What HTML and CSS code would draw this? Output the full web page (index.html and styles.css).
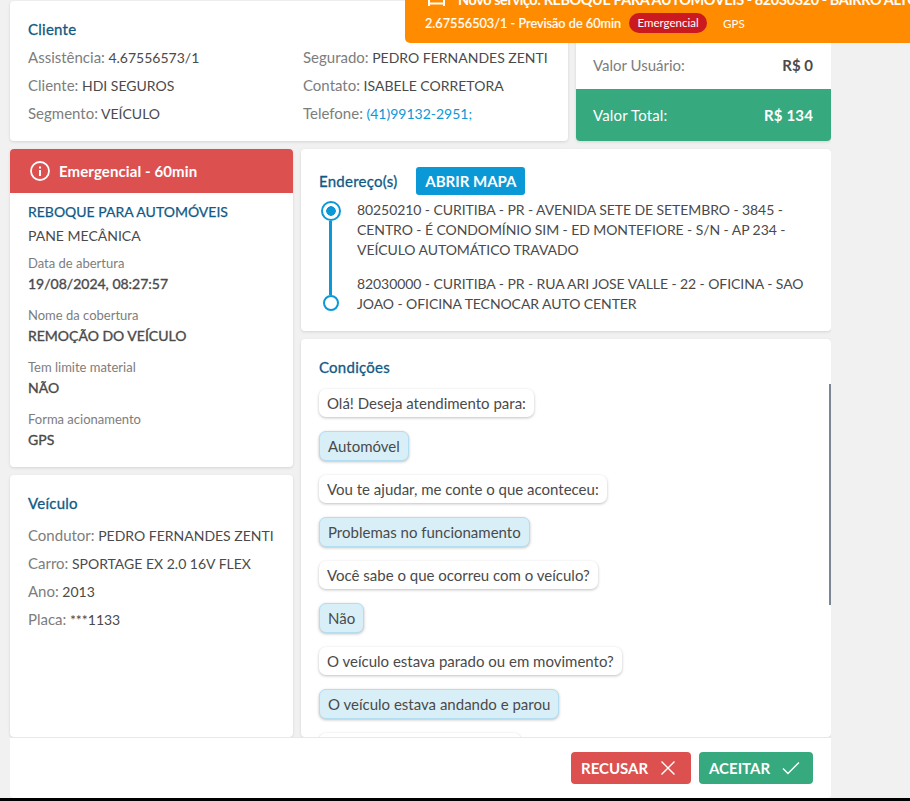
FILE: index.html
```html
<!DOCTYPE html>
<html lang="pt-BR">
<head>
<meta charset="utf-8">
<title>Novo serviço</title>
<link rel="stylesheet" href="styles.css">
</head>
<body>
<div class="modal">
  <div class="layout">
    <div class="toprow">
      <section class="card client">
        <h3 class="heading">Cliente</h3>
        <div class="client-grid">
          <div class="col">
            <p class="line"><span class="lbl">Assistência:</span> 4.67556573/1</p>
            <p class="line"><span class="lbl">Cliente:</span> HDI SEGUROS</p>
            <p class="line"><span class="lbl">Segmento:</span> VEÍCULO</p>
          </div>
          <div class="col">
            <p class="line"><span class="lbl">Segurado:</span> PEDRO FERNANDES ZENTI</p>
            <p class="line"><span class="lbl">Contato:</span> ISABELE CORRETORA</p>
            <p class="line"><span class="lbl">Telefone:</span> <a class="tel">(41)99132-2951;</a></p>
          </div>
        </div>
      </section>
      <section class="card values">
        <div class="val-spacer"></div>
        <div class="val-row"><span class="lbl">Valor Usuário:</span><b>R$ 0</b></div>
        <div class="val-total"><span>Valor Total:</span><b>R$ 134</b></div>
      </section>
    </div>
    <div class="mainrow">
      <div class="side">
        <section class="card service">
          <div class="banner">
            <svg class="info" viewBox="0 0 20 20" width="20" height="20"><circle cx="10" cy="10" r="9" fill="none" stroke="#fff" stroke-width="1.8"/><rect x="9" y="9" width="2" height="6" fill="#fff"/><rect x="9" y="5.5" width="2" height="2" fill="#fff"/></svg>
            <span>Emergencial - 60min</span>
          </div>
          <div class="service-body">
            <div class="svc-title">REBOQUE PARA AUTOMÓVEIS</div>
            <div class="svc-sub">PANE MECÂNICA</div>
            <div class="field"><small>Data de abertura</small><strong>19/08/2024, 08:27:57</strong></div>
            <div class="field"><small>Nome da cobertura</small><strong>REMOÇÃO DO VEÍCULO</strong></div>
            <div class="field"><small>Tem limite material</small><strong>NÃO</strong></div>
            <div class="field"><small>Forma acionamento</small><strong>GPS</strong></div>
          </div>
        </section>
        <section class="card vehicle">
          <h3 class="heading">Veículo</h3>
          <p class="line"><span class="lbl">Condutor:</span> PEDRO FERNANDES ZENTI</p>
          <p class="line"><span class="lbl">Carro:</span> SPORTAGE EX 2.0 16V FLEX</p>
          <p class="line"><span class="lbl">Ano:</span> 2013</p>
          <p class="line"><span class="lbl">Placa:</span> ***1133</p>
        </section>
      </div>
      <div class="center">
        <section class="card address">
          <div class="addr-head">
            <h3 class="heading">Endereço(s)</h3>
            <button class="map-btn">ABRIR MAPA</button>
          </div>
          <div class="route">
            <div class="stop first">
              <span class="dot dot-on"></span>
              <p>80250210 - CURITIBA - PR - AVENIDA SETE DE SETEMBRO - 3845 - CENTRO - É CONDOMÍNIO SIM - ED MONTEFIORE - S/N - AP 234 - VEÍCULO AUTOMÁTICO TRAVADO</p>
            </div>
            <div class="stop">
              <span class="dot"></span>
              <p>82030000 - CURITIBA - PR - RUA ARI JOSE VALLE - 22 - OFICINA - SAO JOAO - OFICINA TECNOCAR AUTO CENTER</p>
            </div>
          </div>
        </section>
        <section class="card conditions">
          <h3 class="heading">Condições</h3>
          <div class="chat">
            <div class="bubble">Olá! Deseja atendimento para:</div>
            <div class="bubble ans">Automóvel</div>
            <div class="bubble">Vou te ajudar, me conte o que aconteceu:</div>
            <div class="bubble ans">Problemas no funcionamento</div>
            <div class="bubble">Você sabe o que ocorreu com o veículo?</div>
            <div class="bubble ans">Não</div>
            <div class="bubble">O veículo estava parado ou em movimento?</div>
            <div class="bubble ans">O veículo estava andando e parou</div>
            <div class="bubble">Qual é o problema do carro?</div>
          </div>
          <span class="scroll"></span>
        </section>
      </div>
    </div>
  </div>
  <footer class="foot">
    <button class="act refuse">RECUSAR
      <svg viewBox="0 0 16 16" width="16" height="16"><path d="M1.5 1.5l13 13M14.5 1.5l-13 13" fill="none" stroke="#fff" stroke-width="1.4"/></svg>
    </button>
    <button class="act accept">ACEITAR
      <svg viewBox="0 0 18 14" width="18" height="14"><path d="M1 7.5l5 5L17 1.5" fill="none" stroke="#fff" stroke-width="1.4"/></svg>
    </button>
  </footer>
</div>
<div class="toast">
  <div class="toast-title">
    <svg class="tow" viewBox="0 0 17 16" width="17" height="16"><path d="M1 0v15M16 0v15M1 12.5h15M4 3v5h9V3" fill="none" stroke="#fff" stroke-width="2"/></svg>
    <span>Novo serviço: REBOQUE PARA AUTOMÓVEIS - 82030320 - BAIRRO ALTO</span>
  </div>
  <div class="toast-sub">
    <span class="toast-id">2.67556503/1 - Previsão de 60min</span>
    <span class="pill">Emergencial</span>
    <span class="gps">GPS</span>
  </div>
</div>
</body>
</html>
```
FILE: styles.css
```css
* { box-sizing: border-box; }
html, body { margin: 0; padding: 0; }
body {
  width: 910px; height: 801px; overflow: hidden; position: relative;
  background: #f1f1f1;
  font-family: "Lato", "Noto Sans", sans-serif;
  font-size: 15px; color: #4a4a4a;
  border-bottom: 3px solid #000;
}
.modal { width: 831px; height: 798px; display: flex; flex-direction: column; background: #f1f1f1; overflow: hidden; }
.layout { flex: 1; min-height: 0; padding: 1px 0 0 10px; display: flex; flex-direction: column; gap: 8px; overflow: hidden; }
.card { background: #fff; border-radius: 4px; box-shadow: 0 1px 3px rgba(0,0,0,.12); }
.toprow { display: flex; gap: 8px; height: 140px; flex: none; }
.client { width: 558px; padding: 19px 18px 0; }
.heading { margin: 0; font-size: 15px; line-height: 18px; font-weight: 400; letter-spacing: .25px; color: #0f5a85; -webkit-text-stroke: .3px #0f5a85; }
.client-grid { display: flex; margin-top: 6px; }
.col { width: 275px; flex: none; }
.line { margin: 0; font-size: 14px; line-height: 28px; height: 28px; white-space: nowrap; }
.lbl { font-size: 15px; line-height: 1; color: #7d7d7d; }
.tel { color: #0b98d6; }
.values { width: 255px; display: flex; flex-direction: column; overflow: hidden; }
.val-spacer { flex: 1; }
.val-row { height: 46px; padding: 0 18px 2px 17px; display: flex; justify-content: space-between; align-items: center; }
.val-total { height: 52px; background: #36a97f; color: #fff; padding: 0 18px 0 17px; display: flex; justify-content: space-between; align-items: center; letter-spacing: .15px; }
.mainrow { display: flex; gap: 8px; flex: 1; min-height: 0; }
.side { width: 283px; display: flex; flex-direction: column; gap: 8px; }
.center { width: 530px; display: flex; flex-direction: column; gap: 8px; }
.banner { height: 44px; background: #dc5050; color: #fff; font-weight: 700; display: flex; align-items: center; gap: 9px; padding: 0 20px; border-radius: 4px 4px 0 0; letter-spacing: .1px; }
.service-body { padding: 10px 18px 16px; }
.svc-title { font-size: 14px; line-height: 18px; color: #0f5a85; -webkit-text-stroke: .25px #0f5a85; }
.svc-sub { font-size: 14px; line-height: 20px; margin: 5px 0 7px; }
.field { margin-bottom: 10px; }
.field:last-child { margin-bottom: 0; }
.field small { display: block; font-size: 13px; line-height: 20px; color: #7d7d7d; }
.field strong { display: block; font-size: 14px; line-height: 22px; font-weight: 400; -webkit-text-stroke: .35px #4a4a4a; }
.vehicle { flex: 1; padding: 19px 18px; }
.vehicle .heading { margin-bottom: 10px; }
.address { height: 182px; padding: 18px 18px 0; flex: none; }
.addr-head { display: flex; align-items: center; gap: 19px; }
.map-btn { border: 0; height: 28px; width: 109px; padding: 0; background: #0b98d6; color: #fff; border-radius: 3px; font: 700 15px "Lato", sans-serif; }
.route { margin-top: 5px; }
.stop { position: relative; padding-left: 38px; }
.stop p { margin: 0; line-height: 20px; font-size: 14px; letter-spacing: -.08px; }
.stop.first { padding-bottom: 14px; }
.stop.first::before { content: ""; position: absolute; left: 10px; top: 21px; bottom: -21px; width: 3px; background: #0b98d6; }
.dot { position: absolute; left: 4px; top: 21px; width: 16px; height: 16px; border: 2px solid #0b98d6; border-radius: 50%; background: #fff; }
.dot-on { left: 2px; top: 1px; width: 20px; height: 20px; background: radial-gradient(circle, #0b98d6 0 4.5px, #fff 5px); }
.conditions { flex: 1; min-height: 0; padding: 19px 18px; position: relative; overflow: hidden; }
.chat { display: flex; flex-direction: column; align-items: flex-start; gap: 14px; margin-top: 13px; }
.bubble { height: 28px; line-height: 28px; padding: 0 8px; background: #fff; border-radius: 7px; box-shadow: 0 1px 3px rgba(0,0,0,.25); white-space: nowrap; }
.bubble.ans { height: 30px; background: #d9eff8; border: 1px solid #b3ddf0; padding: 0 8px; }
.scroll { position: absolute; right: 0; top: 45px; width: 2px; height: 221px; background: #7b8794; }
.foot { height: 61px; flex: none; margin-left: 10px; background: #fff; border-top: 1px solid #e8e8e8; border-radius: 0 0 4px 4px; display: flex; justify-content: flex-end; align-items: flex-start; gap: 8px; padding: 14px 18px 0; }
.act { height: 32px; border: 0; border-radius: 4px; color: #fff; display: flex; align-items: center; font: 700 15px "Lato", sans-serif; padding: 0 13px 0 10px; }
.refuse { width: 120px; background: #dc5050; gap: 12px; }
.accept { width: 114px; background: #36a97f; gap: 12px; }
.toast { position: absolute; left: 405px; top: -15px; width: 520px; height: 58px; background: #ff8c00; color: #fff; border-radius: 0 0 0 5px; padding: 0 0 0 20px; overflow: hidden; }
.toast-title { display: flex; align-items: center; gap: 13px; height: 28px; font-weight: 700; font-size: 14.5px; letter-spacing: -.43px; white-space: nowrap; padding-left: 3px; }
.tow { flex: none; }
.toast-sub { display: flex; align-items: center; font-size: 12.7px; height: 20px; white-space: nowrap; }
.toast-id { -webkit-text-stroke: .2px #fff; }
.pill { margin-left: 8px; height: 20px; line-height: 20px; width: 78px; text-align: center; border-radius: 10px; background: #cb1a1f; font-size: 11.5px; }
.gps { margin-left: 16px; font-size: 11.5px; }
```
